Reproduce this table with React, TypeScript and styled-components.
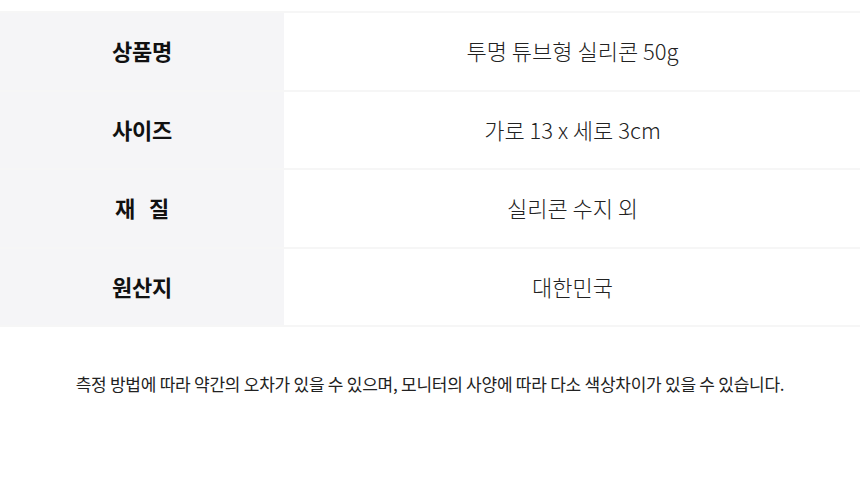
import React from "react";
import styled, { createGlobalStyle } from "styled-components";

const Global = createGlobalStyle`
  html, body { margin: 0; padding: 0; background: #fff; }
  body { font-family: "Noto Sans CJK KR", "Noto Sans", sans-serif; color: #222; }
`;

const Page = styled.div`
  width: 860px;
  padding-top: 11px;
`;

const Table = styled.div`
  display: flex;
  flex-direction: column;
  border-top: 2px solid #f6f6f6;
`;

const Row = styled.div`
  display: grid;
  grid-template-columns: 284px 1fr;
  column-gap: 1px;
  height: 76.6px;
  border-bottom: 2px solid #f6f6f6;
`;

const Label = styled.div`
  background: #f5f5f7;
  display: flex;
  align-items: center;
  justify-content: center;
  padding-bottom: 2px;
  font-size: 22px;
  font-weight: 700;
  color: #111;
  white-space: pre;
  letter-spacing: -0.3px;
`;

const Value = styled.div`
  display: flex;
  align-items: center;
  justify-content: center;
  padding-bottom: 2px;
  font-size: 22px;
  font-weight: 300;
  color: #222;
`;

const Note = styled.p`
  margin: 44px 0 0;
  text-align: center;
  font-size: 17px;
  font-weight: 400;
  color: #222;
  letter-spacing: -0.25px;
`;

const rows: [string, string][] = [
  ["상품명", "투명 튜브형 실리콘 50g"],
  ["사이즈", "가로 13 x 세로 3cm"],
  ["재   질", "실리콘 수지 외"],
  ["원산지", "대한민국"],
];

export default function App() {
  return (
    <Page>
      <Global />
      <Table>
        {rows.map(([k, v]) => (
          <Row key={k}>
            <Label>{k}</Label>
            <Value>{v}</Value>
          </Row>
        ))}
      </Table>
      <Note>측정 방법에 따라 약간의 오차가 있을 수 있으며, 모니터의 사양에 따라 다소 색상차이가 있을 수 있습니다.</Note>
    </Page>
  );
}
